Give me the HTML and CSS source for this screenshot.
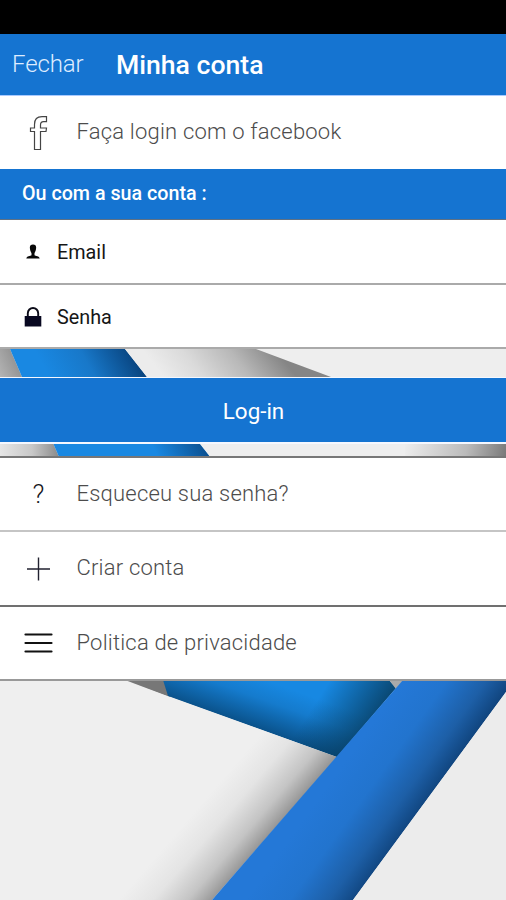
FILE: index.html
```html
<!DOCTYPE html>
<html lang="pt">
<head>
<meta charset="utf-8">
<title>Minha conta</title>
<link rel="stylesheet" href="styles.css">
</head>
<body>
<main class="screen">
  <svg class="backdrop" viewBox="0 0 506 900" aria-hidden="true">
    <defs>
      <linearGradient id="leftShade" gradientUnits="userSpaceOnUse" x1="-42" y1="376" x2="17" y2="349"><stop offset="0" stop-color="#eee"/><stop offset="1" stop-color="#8b8b8b"/></linearGradient>
      <linearGradient id="ribbon" gradientUnits="userSpaceOnUse" x1="62" y1="400" x2="140" y2="357"><stop offset="0" stop-color="#1988e2"/><stop offset=".45" stop-color="#1878c9"/><stop offset="1" stop-color="#073f78"/></linearGradient>
      <linearGradient id="ribbonLow" gradientUnits="userSpaceOnUse" x1="142" y1="474" x2="207" y2="444"><stop offset="0" stop-color="#1988e2"/><stop offset=".3" stop-color="#1988e2"/><stop offset="1" stop-color="#0a4d8c"/></linearGradient>
      <linearGradient id="fold" gradientUnits="userSpaceOnUse" x1="190" y1="410" x2="272" y2="345"><stop offset="0" stop-color="#ececec"/><stop offset=".3" stop-color="#dadada"/><stop offset=".65" stop-color="#b8b8b8"/><stop offset="1" stop-color="#858585"/></linearGradient>
      <linearGradient id="lowShade" gradientUnits="userSpaceOnUse" x1="0" y1="0" x2="58" y2="0"><stop offset="0" stop-color="#e6e6e6"/><stop offset=".55" stop-color="#c8c8c8"/><stop offset="1" stop-color="#8c8c8c"/></linearGradient>
      <linearGradient id="rightShade" gradientUnits="userSpaceOnUse" x1="405" y1="440" x2="506" y2="462"><stop offset="0" stop-color="#eee"/><stop offset=".6" stop-color="#bbb"/><stop offset="1" stop-color="#777"/></linearGradient>
      <linearGradient id="bandBottom" gradientUnits="userSpaceOnUse" x1="268" y1="681" x2="252" y2="726"><stop offset="0" stop-color="#1788e2"/><stop offset=".4" stop-color="#157bcd"/><stop offset="1" stop-color="#0a528b"/></linearGradient>
      <linearGradient id="bandEnd" gradientUnits="userSpaceOnUse" x1="325" y1="688" x2="374" y2="720"><stop offset="0" stop-color="#073d60" stop-opacity="0"/><stop offset="1" stop-color="#073d60" stop-opacity=".85"/></linearGradient>
      <linearGradient id="paper" gradientUnits="userSpaceOnUse" x1="220" y1="782" x2="277" y2="831"><stop offset="0" stop-color="#efefef"/><stop offset=".35" stop-color="#e4e4e4"/><stop offset=".7" stop-color="#c4c4c4"/><stop offset="1" stop-color="#8e8e8e"/></linearGradient>
      <linearGradient id="diagonal" gradientUnits="userSpaceOnUse" x1="360" y1="740" x2="434" y2="793"><stop offset="0" stop-color="#2478d7"/><stop offset=".4" stop-color="#2274ce"/><stop offset=".75" stop-color="#1d5fa7"/><stop offset="1" stop-color="#10447d"/></linearGradient>
    </defs>
    <path fill="#eee" d="M0 340H506V900H0z"/>
    <path fill="url(#leftShade)" d="M0 349H10L22 377H0z"/>
    <path fill="url(#ribbon)" d="M10 349H125L147 377H22z"/>
    <path fill="url(#fold)" d="M125 349H256L331 377H147z"/>
    <path fill="url(#lowShade)" d="M0 443H53L59 457H0z"/>
    <path fill="#1988e2" d="M53 443H199L210 457H59z"/>
    <path fill="url(#ribbonLow)" d="M140 443H199L210 457H140z"/>
    <path fill="url(#rightShade)" d="M405 443H506V457H405z"/>
    <path fill="#777" d="M125 680H166L170 697z"/>
    <path fill="url(#bandBottom)" d="M163 680H389L396 688L337 757L168 696z"/>
    <path fill="url(#bandEnd)" d="M163 680H389L396 688L337 757L168 696z"/>
    <path fill="#aaa" d="M389 680H404L396 689z"/>
    <path fill="url(#paper)" d="M0 681H125L337 757L212 900H0z"/>
    <path fill="url(#diagonal)" d="M403 680H506V692L353 900H212z"/>
    <path fill="#ececec" d="M506 692V900H353z"/>
  </svg>

  <div class="status"></div>
  <header class="header">
    <a class="close">Fechar</a>
    <h1 class="title">Minha conta</h1>
  </header>

  <a class="row facebook">
    <svg class="icon" viewBox="0 0 30 36"><path d="M11.500 34.500V16.500H7.500V13H11.500V9.500C11.500 4 14 1.600 19 1.600H23.500V6.600H20.500C18 6.600 17.500 8 17.500 10V13H23.500L23 16.500H17.500V34.500z" fill="none" stroke="#444" stroke-width="1.200"/></svg>
    <span class="label">Faça login com o facebook</span>
  </a>
  <h2 class="section">Ou com a sua conta :</h2>
  <label class="field email">
    <svg class="glyph" viewBox="0 0 18 20"><path d="M9 2.500C6.500 2.500 5.600 4 5.900 6.300C6.100 8.800 7 10 7.500 11.200V13.200C6.500 14.300 2.600 13.800 2.300 16.500H15.700C15.400 13.800 11.500 14.300 10.500 13.200V11.200C11 10 11.900 8.800 12.100 6.300C12.400 4 11.500 2.500 9 2.500z" fill="#080808"/></svg>
    <span>Email</span>
  </label>
  <label class="field password">
    <svg class="glyph" viewBox="0 0 18 20"><path d="M3.800 10V6.200a5.200 5.200 0 0 1 10.400 0V10" fill="none" stroke="#0b0b18" stroke-width="1.900"/><path d="M.7 9H17.300V19.500H.7z" fill="#080820"/></svg>
    <span class="senha">Senha</span>
  </label>
  <button class="login">Log-in</button>
  <nav class="menu">
    <a class="row forgot"><span class="icon question">?</span><span class="label">Esqueceu sua senha?</span></a>
    <a class="row create"><svg class="icon" viewBox="0 0 30 36"><path d="M15.500 6.500V29.500M4 18H27" stroke="#222230" stroke-width="1.400"/></svg><span class="label">Criar conta</span></a>
    <a class="row privacy"><svg class="icon" viewBox="0 0 30 36"><path d="M2.500 9.500H28.500M2.500 18H28.500M2.500 26.500H28.500" stroke="#111" stroke-width="2.200" stroke-linecap="round"/></svg><span class="label">Politica de privacidade</span></a>
  </nav>
</main>
</body>
</html>
```

FILE: styles.css
```css
* { box-sizing: border-box; }
body { margin: 0; font-family: Roboto, "Liberation Sans", sans-serif; }
.screen { position: relative; width: 506px; height: 900px; overflow: hidden; isolation: isolate; }
.backdrop { position: absolute; inset: 0; width: 506px; height: 900px; z-index: -1; }
.status { height: 34px; background: #000; }
.header { height: 62px; display: flex; align-items: center; background: #1574d1; color: #fff; border-bottom: 1px solid #a9caff; }
.close { width: 104px; margin-left: 12px; font-size: 24px; font-weight: 300; letter-spacing: -.1px; line-height: 26px; padding-bottom: 2px; color: #deecff; }
.title { margin: 0; font-size: 26.6px; font-weight: 500; line-height: 32px; }
.row { height: 74px; padding-left: 23px; display: flex; align-items: center; background: #fff; font-size: 22px; font-weight: 300; color: #4c4c4c; letter-spacing: .2px; }
.label { padding-bottom: 2px; }
.icon { width: 30px; height: 36px; margin-right: 23.5px; flex: none; }
.question { padding-left: 1px; text-align: center; line-height: 37px; font-size: 26px; color: #16161c; }
.facebook { height: 73px; }
.section { height: 51px; margin: 0; padding: 0 22px 2px; display: flex; align-items: center; background: #1574d1; border-bottom: 1px solid #607184; color: #fff; font-size: 19.7px; font-weight: 500; }
.field { height: 65px; padding: 1px 0 0 24px; display: flex; align-items: center; background: #fff; color: #161616; font-size: 19.8px; border-bottom: 2px solid #aaa; }
.password { height: 64px; }
.senha { padding-top: 1px; }
.glyph { width: 18px; height: 20px; margin-right: 15px; }
.login { display: block; width: 100%; height: 67px; margin: 28px 0 12px; padding: 1px 0 0 1px; border: solid #f5f8ff; border-width: 1px 0 2px; background: #1574d1; color: #fff; font: 400 22.4px/28px Roboto, "Liberation Sans", sans-serif; }
.menu { border-top: 2px solid #777; }
.forgot { height: 74px; border-bottom: 2px solid #c5c5c5; }
.create { height: 75px; border-bottom: 2px solid #707070; }
.privacy { height: 74px; border-bottom: 2px solid #999; }
```
